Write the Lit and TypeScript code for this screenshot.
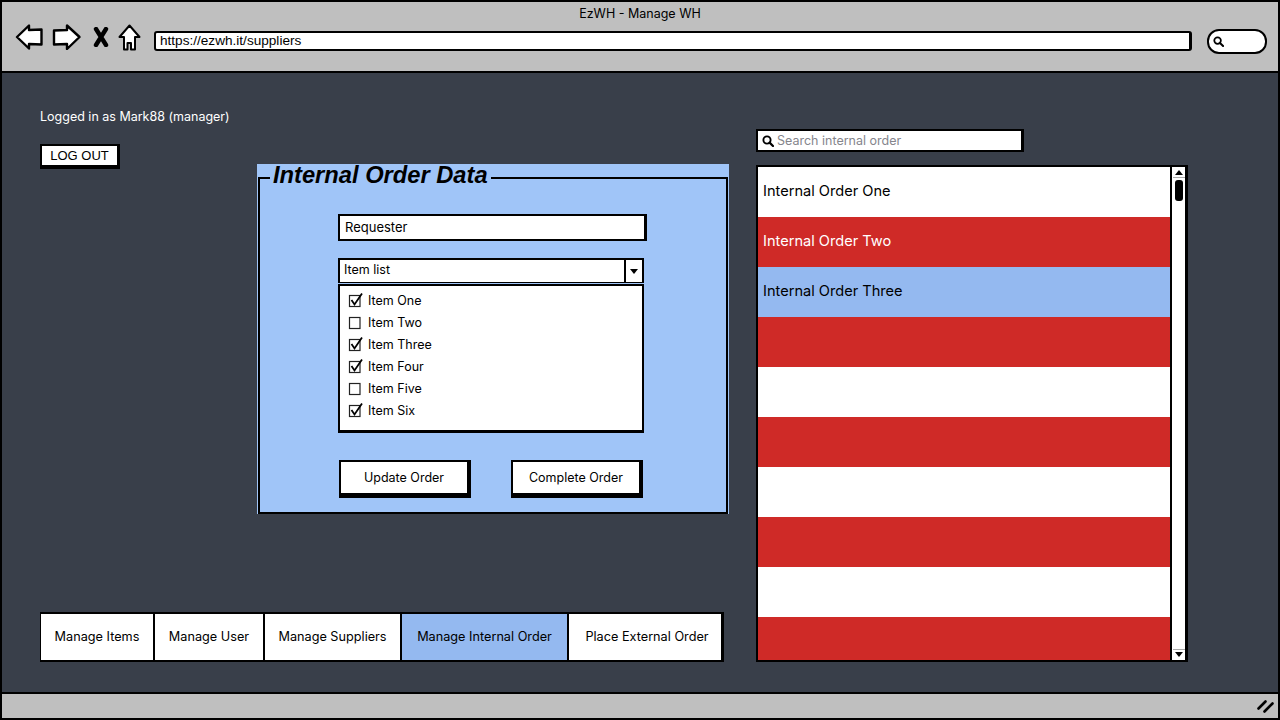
import { LitElement, html, css, svg } from 'lit';
import { customElement, property } from 'lit/decorators.js';

type Row = { label: string; tone: 'white' | 'red' | 'blue' };

const ITEMS = [
  { label: 'Item One', checked: true },
  { label: 'Item Two', checked: false },
  { label: 'Item Three', checked: true },
  { label: 'Item Four', checked: true },
  { label: 'Item Five', checked: false },
  { label: 'Item Six', checked: true },
];

const ROWS: Row[] = [
  { label: 'Internal Order One', tone: 'white' },
  { label: 'Internal Order Two', tone: 'red' },
  { label: 'Internal Order Three', tone: 'blue' },
  { label: '', tone: 'red' },
  { label: '', tone: 'white' },
  { label: '', tone: 'red' },
  { label: '', tone: 'white' },
  { label: '', tone: 'red' },
  { label: '', tone: 'white' },
  { label: '', tone: 'red' },
];

const TABS = [
  { label: 'Manage Items', width: 114 },
  { label: 'Manage User', width: 110 },
  { label: 'Manage Suppliers', width: 137 },
  { label: 'Manage Internal Order', width: 167, active: true },
  { label: 'Place External Order', width: 152 },
];

const searchIcon = (size: number) => html`
  <svg width=${size} height=${size} viewBox="0 0 12 12">
    <circle cx="5" cy="5" r="3.6" fill="none" stroke="#000" stroke-width="1.9" />
    <path d="M7.6 7.6L11 11" stroke="#000" stroke-width="2.2" stroke-linecap="round" />
  </svg>
`;

const checkIcon = (checked: boolean) => html`
  <svg class="check" width="16" height="16" viewBox="0 0 16 16">
    <rect x="1.5" y="3.5" width="10.5" height="11" fill="#fff" stroke="#222" stroke-width="1.2" />
    ${checked
      ? svg`<path d="M3.5 8L6.5 12.5L14 1.5" fill="none" stroke="#000" stroke-width="1.8" />`
      : ''}
  </svg>
`;

@customElement('sketch-toolbar')
export class SketchToolbar extends LitElement {
  @property() url = '';

  static styles = css`
    :host {
      display: flex;
      align-items: center;
      height: 24px;
      margin-top: 1px;
    }

    svg {
      display: block;
      flex: none;
    }

    .nav-icon {
      margin-bottom: 8px;
    }

    .back {
      margin-left: 13px;
    }

    .forward {
      margin-left: 9px;
    }

    .stop {
      margin-left: 12px;
    }

    .home {
      margin-left: 9px;
      margin-bottom: 7px;
    }

    .address {
      flex: none;
      box-sizing: border-box;
      width: 1038px;
      height: 20px;
      margin-left: 13px;
      padding-left: 4px;
      background: #fff;
      border: 2px solid #000;
      border-right-width: 3px;
      border-radius: 3px;
      font: 13.6px/15px 'Liberation Sans', sans-serif;
      color: #000;
    }

    .search {
      flex: none;
      display: flex;
      align-items: center;
      box-sizing: border-box;
      width: 60px;
      height: 25px;
      margin-left: 15px;
      padding-left: 4px;
      background: #fff;
      border: 2px solid #000;
      border-radius: 12px;
    }
  `;

  render() {
    return html`
      <svg class="nav-icon back" width="28" height="26" viewBox="0 0 28 26">
        <path d="M2 13L14 1.5V6L26.5 5.5V20.5L14 20V24.5Z" fill="#fff" stroke="#000" stroke-width="2.4" stroke-linejoin="round" />
      </svg>
      <svg class="nav-icon forward" width="29" height="26" viewBox="0 0 29 26">
        <path d="M27.5 13L15 1.5V6L2 6.5V20.5L15 20V25Z" fill="#fff" stroke="#000" stroke-width="2.4" stroke-linejoin="round" />
      </svg>
      <svg class="nav-icon stop" width="16" height="20" viewBox="0 0 16 20">
        <path d="M3 2L13 18M13 2L3 18" stroke="#000" stroke-width="4.4" stroke-linecap="round" />
      </svg>
      <svg class="nav-icon home" width="23" height="27" viewBox="0 0 23 27">
        <path d="M11.5 1.5L21.5 13H17V25.5H13V19H9.5V25.5H6V13H1.5Z" fill="#fff" stroke="#000" stroke-width="2" stroke-linejoin="round" />
      </svg>
      <div class="address">${this.url}</div>
      <div class="search">${searchIcon(11)}</div>
    `;
  }
}

@customElement('app-root')
export class AppRoot extends LitElement {
  static styles = css`
    :host {
      display: block;
      font-family: 'Inter', sans-serif;
    }

    .frame {
      box-sizing: border-box;
      display: flex;
      flex-direction: column;
      width: 1280px;
      height: 720px;
      border: 2px solid #000;
      background: #bfbfbf;
    }

    .header {
      flex: none;
      height: 69px;
      border-bottom: 2px solid #000;
    }

    .title {
      height: 22px;
      padding-top: 4px;
      text-align: center;
      font: 12.5px/16px 'Inter', sans-serif;
      color: #000;
    }

    .main {
      flex: 1;
      min-height: 0;
      display: flex;
      gap: 26px;
      padding: 0 0 30px 38px;
      background: #393f4a;
    }

    .left {
      width: 690px;
      display: flex;
      flex-direction: column;
      justify-content: space-between;
    }

    .top {
      display: flex;
    }

    .session {
      width: 217px;
      padding-top: 36px;
    }

    .user {
      font-size: 12.5px;
      line-height: 16px;
      color: #fff;
    }

    .logout {
      box-sizing: border-box;
      display: block;
      width: 80px;
      height: 25px;
      margin-top: 19px;
      padding: 0;
      background: #fff;
      border: 2px solid #000;
      border-right-width: 3px;
      border-bottom-width: 4px;
      font: 13px/17px 'Liberation Sans', sans-serif;
      color: #000;
    }

    .panel {
      box-sizing: border-box;
      width: 472px;
      height: 350px;
      margin-top: 91px;
      padding: 0 1px;
      background: #a0c5f8;
    }

    fieldset {
      box-sizing: border-box;
      display: block;
      height: 350px;
      margin: 0;
      padding: 0;
      border: 2px solid #000;
      min-width: 0;
    }

    legend {
      margin-left: 10px;
      padding: 0 3px 6px;
      font: italic 700 23.7px/22px 'Liberation Sans', sans-serif;
      color: #000;
    }

    .form {
      padding: 22px 0 0 78px;
    }

    .requester {
      box-sizing: border-box;
      width: 309px;
      height: 27px;
      padding-left: 5px;
      background: #fff;
      border: 2px solid #000;
      border-right-width: 3px;
      font-size: 13px;
      line-height: 22px;
      color: #000;
    }

    .select {
      box-sizing: border-box;
      display: flex;
      justify-content: space-between;
      width: 306px;
      height: 25px;
      margin-top: 17px;
      padding-left: 4px;
      background: #fff;
      border: 2px solid #000;
      border-bottom-width: 1px;
      font-size: 12.5px;
      line-height: 20px;
      color: #000;
    }

    .caret {
      display: flex;
      align-items: center;
      justify-content: center;
      width: 16px;
      border-left: 2px solid #000;
    }

    .caret i {
      width: 0;
      height: 0;
      border: 4px solid transparent;
      border-top: 5px solid #000;
      border-bottom: 0;
    }

    .options {
      box-sizing: border-box;
      width: 306px;
      height: 149px;
      margin-top: 1px;
      padding: 3px 0 0 8px;
      background: #fff;
      border: 2px solid #000;
      border-bottom-width: 3px;
    }

    .option {
      display: flex;
      align-items: center;
      gap: 4px;
      height: 22px;
      font-size: 12.5px;
      color: #000;
    }

    .check {
      display: block;
      flex: none;
    }

    .actions {
      display: flex;
      gap: 40px;
      margin-top: 27px;
      padding-left: 1px;
    }

    .actions button {
      box-sizing: border-box;
      width: 132px;
      height: 38px;
      padding: 0;
      background: #fff;
      border: 2px solid #000;
      border-right-width: 4px;
      border-bottom-width: 5px;
      font: 12.5px 'Inter', sans-serif;
      color: #000;
    }

    .nav {
      box-sizing: border-box;
      display: flex;
      width: 684px;
      height: 50px;
      background: #fff;
      border: 2px solid #000;
      border-right-width: 3px;
      border-left-width: 1px;
    }

    .tab {
      box-sizing: border-box;
      flex: none;
      display: flex;
      align-items: center;
      justify-content: center;
      padding-bottom: 1px;
      border-right: 2px solid #000;
      font-size: 12.7px;
      color: #000;
    }

    .tab:last-child {
      padding-left: 4px;
      border-right: 0;
    }

    .tab.active {
      background: #94b9f0;
    }

    .right {
      width: 432px;
      min-height: 0;
      display: flex;
      flex-direction: column;
      padding-top: 56px;
    }

    .find {
      box-sizing: border-box;
      flex: none;
      display: flex;
      align-items: center;
      gap: 3px;
      width: 268px;
      height: 23px;
      padding-left: 4px;
      background: #fff;
      border: 2px solid #000;
      border-right-width: 3px;
      font-size: 12.5px;
      color: #85858c;
    }

    .list {
      box-sizing: border-box;
      flex: 1;
      display: flex;
      min-height: 0;
      margin-top: 13px;
      border: 2px solid #000;
      border-right-width: 3px;
      background: #fff;
    }

    .rows {
      flex: 1;
      overflow: hidden;
    }

    .row {
      box-sizing: border-box;
      height: 50px;
      padding-left: 5px;
      font-size: 14.6px;
      line-height: 48px;
      color: #000;
    }

    .row.red {
      background: #cf2a27;
      color: #fff;
    }

    .row.blue {
      background: #94b9f0;
    }

    .scrollbar {
      flex: none;
      display: flex;
      flex-direction: column;
      align-items: center;
      box-sizing: border-box;
      width: 15px;
      padding: 1px 0;
      border-left: 2px solid #000;
    }

    .arrow {
      display: flex;
      align-items: center;
      justify-content: center;
      width: 12px;
      height: 9px;
      border-bottom: 1px solid #aaa;
    }

    .arrow i {
      width: 0;
      height: 0;
      border: 4px solid transparent;
      border-bottom: 5px solid #000;
      border-top: 0;
    }

    .arrow.down {
      margin-top: auto;
      border-bottom: 0;
      border-top: 1px solid #aaa;
    }

    .arrow.down i {
      border-top: 5px solid #000;
      border-bottom: 0;
    }

    .thumb {
      width: 8px;
      height: 21px;
      margin-top: 2px;
      background: #000;
      border-radius: 3px;
    }

    .footer {
      flex: none;
      display: flex;
      align-items: center;
      justify-content: flex-end;
      height: 24px;
      padding-right: 3px;
      border-top: 2px solid #000;
    }

    .footer svg {
      display: block;
    }
  `;

  render() {
    return html`
      <div class="frame">
        <header class="header">
          <div class="title">EzWH - Manage WH</div>
          <sketch-toolbar url="https://ezwh.it/suppliers"></sketch-toolbar>
        </header>
        <main class="main">
          <div class="left">
            <div class="top">
              <div class="session">
                <div class="user">Logged in as Mark88 (manager)</div>
                <button class="logout">LOG OUT</button>
              </div>
              <section class="panel">
                <fieldset>
                  <legend>Internal Order Data</legend>
                  <div class="form">
                    <div class="requester">Requester</div>
                    <div class="select">
                      <span>Item list</span>
                      <span class="caret"><i></i></span>
                    </div>
                    <div class="options">
                      ${ITEMS.map(
                        (item) => html`
                          <div class="option">${checkIcon(item.checked)}<span>${item.label}</span></div>
                        `
                      )}
                    </div>
                    <div class="actions">
                      <button>Update Order</button>
                      <button>Complete Order</button>
                    </div>
                  </div>
                </fieldset>
              </section>
            </div>
            <nav class="nav">
              ${TABS.map(
                (tab) => html`
                  <div class="tab ${tab.active ? 'active' : ''}" style="width: ${tab.width}px">${tab.label}</div>
                `
              )}
            </nav>
          </div>
          <div class="right">
            <div class="find">${searchIcon(12)}<span>Search internal order</span></div>
            <div class="list">
              <div class="rows">
                ${ROWS.map((row) => html`<div class="row ${row.tone}">${row.label}</div>`)}
              </div>
              <div class="scrollbar">
                <div class="arrow"><i></i></div>
                <div class="thumb"></div>
                <div class="arrow down"><i></i></div>
              </div>
            </div>
          </div>
        </main>
        <footer class="footer">
          <svg width="18" height="14" viewBox="0 0 18 14">
            <path d="M1.5 9.5L8.5 2.5M7.5 12.5L15.5 4.5" stroke="#000" stroke-width="2.6" stroke-linecap="round" />
          </svg>
        </footer>
      </div>
    `;
  }
}
